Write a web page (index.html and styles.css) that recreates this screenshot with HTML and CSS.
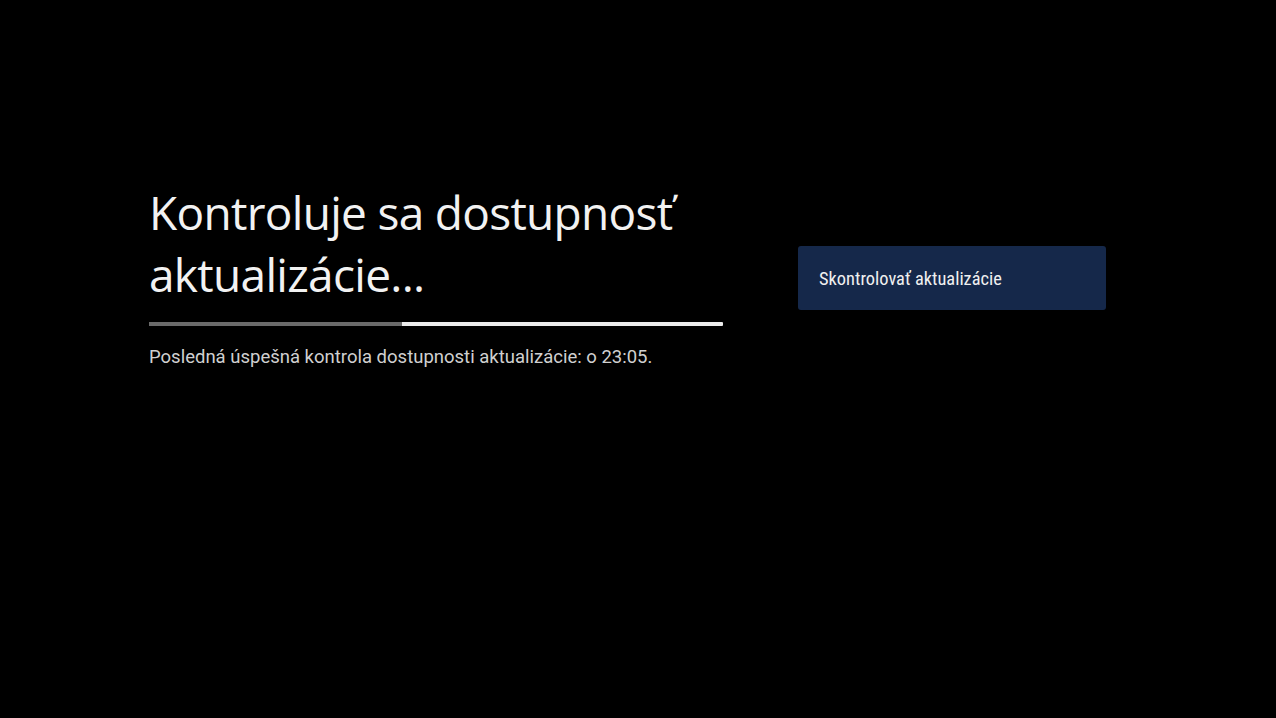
FILE: index.html
```html
<!DOCTYPE html>
<html lang="sk">
<head>
<meta charset="utf-8">
<link rel="stylesheet" href="styles.css">
</head>
<body>
<main class="screen">
  <section class="info">
    <h1 class="title">Kontroluje sa dostupnosť aktualizácie...</h1>
    <div class="progress"><div class="progress-fill" style="width:44%"></div></div>
    <p class="status">Posledná úspešná kontrola dostupnosti aktualizácie: o 23:05.</p>
  </section>
  <aside class="actions">
    <div class="btn">Skontrolovať aktualizácie</div>
  </aside>
</main>
</body>
</html>
```
FILE: styles.css
```css
html, body {
  margin: 0;
  padding: 0;
  background: #000;
  width: 1276px;
  height: 718px;
  overflow: hidden;
}
.screen {
  display: flex;
  align-items: flex-start;
  padding: 181px 0 0 149px;
  gap: 75px;
}
.info {
  width: 574px;
}
.title {
  margin: 0;
  font-family: "Open Sans", Lato, sans-serif;
  font-weight: 400;
  font-size: 46px;
  line-height: 62px;
  color: #f2f2f2;
  letter-spacing: -0.7px;
}
.progress {
  margin-top: 17px;
  height: 4px;
  background: #ececec;
  border-radius: 1px;
}
.progress-fill {
  height: 100%;
  background: #6a6a6a;
}
.status {
  margin: 19px 0 0;
  font-family: Roboto, sans-serif;
  font-size: 18.5px;
  line-height: 24px;
  color: #d0d0d0;
}
.actions {
  padding-top: 65px;
}
.btn {
  width: 308px;
  height: 64px;
  box-sizing: border-box;
  padding: 0 21px;
  display: flex;
  align-items: center;
  background: #15284a;
  border-radius: 3px;
  font-family: "Roboto Condensed", "Liberation Sans Narrow", Roboto, sans-serif;
  font-size: 18.4px;
  color: #f0f0f0;
}
```
